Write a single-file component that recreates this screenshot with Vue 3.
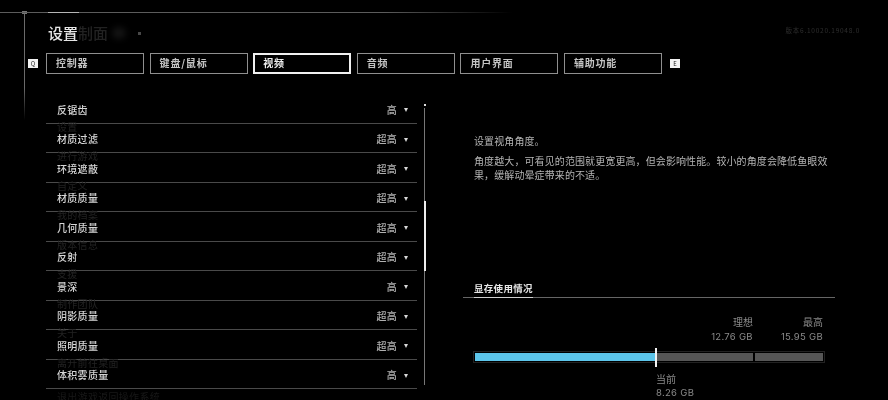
<script setup>
const tabs = [
  { label: '控制器' },
  { label: '键盘/鼠标' },
  { label: '视频', active: true },
  { label: '音频' },
  { label: '用户界面' },
  { label: '辅助功能' },
]

// the ghost text is the pause menu showing through behind the list
const rows = [
  { name: '反锯齿', value: '高', ghost: '设置' },
  { name: '材质过滤', value: '超高', ghost: '进行游戏' },
  { name: '环境遮蔽', value: '超高', ghost: '自定义' },
  { name: '材质质量', value: '超高', ghost: '我的档案' },
  { name: '几何质量', value: '超高', ghost: '版本信息' },
  { name: '反射', value: '超高', ghost: '支援' },
  { name: '景深', value: '高', ghost: '制作团队' },
  { name: '阴影质量', value: '超高', ghost: '关于' },
  { name: '照明质量', value: '超高', ghost: '离开前往桌面' },
  { name: '体积雾质量', value: '高', ghost: '退出游戏返回操作系统' },
]

const usedPercent = 52
</script>

<template>
  <div class="screen">
    <div class="side-line"></div>
    <div class="top-rule"><span class="top-accent"></span></div>

    <header class="title-bar">
      <h1 class="title">设置<span class="title-ghost">制面</span><span class="title-blob"></span><span class="title-dot"></span></h1>
      <span class="version">版本6.10020.19048.0</span>
    </header>

    <nav class="tabs">
      <span class="key-hint">Q</span>
      <button v-for="tab in tabs" :key="tab.label" class="tab" :class="{ active: tab.active }">
        {{ tab.label }}
      </button>
      <span class="key-hint key-right">E</span>
    </nav>

    <main class="content">
      <section class="list-wrap">
        <ul class="list">
          <li v-for="row in rows" :key="row.name" class="row">
            <span class="row-name">{{ row.name }}</span>
            <span class="row-value">{{ row.value }}</span>
            <span class="row-arrow"></span>
            <span class="row-ghost">{{ row.ghost }}</span>
          </li>
        </ul>
        <div class="scrollbar">
          <span class="scroll-dot"></span>
          <div class="scroll-track"><span class="scroll-thumb"></span></div>
        </div>
      </section>

      <aside class="details">
        <div class="description">
          <p>设置视角角度。</p>
          <p>角度越大，可看见的范围就更宽更高，但会影响性能。较小的角度会降低鱼眼效果，缓解动晕症带来的不适。</p>
        </div>

        <div class="memory">
          <div class="memory-head"><span class="memory-title">显存使用情况</span></div>
          <div class="limits">
            <div class="limit">
              <span>理想</span>
              <span class="num">12.76 GB</span>
            </div>
            <div class="limit limit-max">
              <span>最高</span>
              <span class="num">15.95 GB</span>
            </div>
          </div>
          <div class="bar">
            <div class="bar-used" :style="{ width: usedPercent + '%' }">
              <span class="bar-marker"></span>
            </div>
            <div class="bar-ideal"></div>
            <div class="bar-max"></div>
          </div>
          <div class="current">
            <span>当前</span>
            <span class="num">8.26 GB</span>
          </div>
        </div>
      </aside>
    </main>
  </div>
</template>

<style scoped>
.screen {
  position: relative;
  width: 888px;
  height: 400px;
  padding-top: 12px;
  box-sizing: border-box;
  overflow: hidden;
  background: #000;
  color: #d0d0d0;
  font-family: "Noto Sans CJK SC", "Liberation Sans", sans-serif;
  filter: blur(0.35px);
}

.side-line {
  position: absolute;
  left: 24px;
  top: 12px;
  width: 1px;
  height: 108px;
  background: linear-gradient(#6a6a6a 70%, rgba(106, 106, 106, 0));
}

.side-line::before {
  content: '';
  position: absolute;
  left: -2px;
  top: -1px;
  width: 5px;
  height: 3px;
  background: #777;
}

.top-rule {
  position: relative;
  height: 1px;
  width: 512px;
  background: linear-gradient(90deg, #5c5c5c 75%, rgba(92, 92, 92, 0));
}

.top-accent {
  display: block;
  width: 31px;
  height: 1px;
  margin-left: 48px;
  background: #b5b5b5;
}

.title-bar {
  display: flex;
  justify-content: space-between;
  align-items: center;
  height: 40px;
  padding: 0 28px 0 48px;
}

.title {
  display: flex;
  align-items: center;
  margin: 0;
  font-size: 15px;
  font-weight: 500;
  line-height: 40px;
  color: #e6e6e6;
}

.title-ghost {
  color: #222;
}

.title-blob {
  width: 14px;
  height: 12px;
  margin-left: 4px;
  border-radius: 50%;
  background: #141414;
  filter: blur(3px);
}

.title-dot {
  width: 3px;
  height: 3px;
  margin-left: 12px;
  background: #484848;
}

.version {
  margin-bottom: 6px;
  font-size: 6.5px;
  letter-spacing: 0.75px;
  color: #2e2e2e;
}

.tabs {
  display: flex;
  align-items: center;
  height: 21px;
  padding-left: 28px;
}

.key-hint {
  width: 10px;
  height: 9px;
  margin-right: 8px;
  background: #f2f2f2;
  color: #222;
  font-size: 6px;
  line-height: 9px;
  text-align: center;
}

.key-right {
  margin: 0 0 0 8px;
}

.tab {
  width: 98px;
  height: 21px;
  margin-right: 5.6px;
  padding: 0 0 2px 9px;
  box-sizing: border-box;
  border: 1px solid #8f8f8f;
  border-radius: 0;
  background: #000;
  color: #c4c4c4;
  font-family: inherit;
  font-size: 10px;
  font-weight: 700;
  letter-spacing: 0.8px;
  text-align: left;
}

.tab:last-of-type {
  margin-right: 0;
}

.tab.active {
  border: 2px solid #f0f0f0;
  padding-left: 8px;
  color: #f0f0f0;
}

.content {
  display: grid;
  grid-template-columns: 428px 1fr;
  margin-top: 20px;
}

.list-wrap {
  display: flex;
  padding-left: 46px;
}

.list {
  width: 371px;
  margin: 0;
  padding: 0;
  list-style: none;
}

.row {
  position: relative;
  display: flex;
  align-items: center;
  height: 29.5px;
  padding: 2px 9px 0 11px;
  box-sizing: border-box;
  border-bottom: 1px solid #4a4a4a;
  font-size: 10px;
  font-weight: 500;
  letter-spacing: 0.3px;
}

.row-name {
  flex: 1;
  color: #d6d6d6;
}

.row-value {
  margin-right: 7px;
  color: #b0b0b0;
}

.row-arrow {
  width: 0;
  height: 0;
  margin-top: 2px;
  border-left: 2.5px solid transparent;
  border-right: 2.5px solid transparent;
  border-top: 4px solid #d8d8d8;
}

.row-ghost {
  position: absolute;
  left: 11px;
  top: 27.5px;
  line-height: 10px;
  font-weight: 400;
  color: #222;
  white-space: nowrap;
}

.row:last-child .row-ghost {
  top: 32.5px;
  color: #181818;
}

.scrollbar {
  display: flex;
  flex-direction: column;
  align-items: center;
  width: 3px;
  margin: 10px 0 0 6px;
}

.scroll-dot {
  width: 2px;
  height: 2px;
  margin-bottom: 2px;
  background: #ddd;
}

.scroll-track {
  width: 1px;
  height: 277px;
  padding-top: 93px;
  box-sizing: border-box;
  background: #777;
}

.scroll-thumb {
  display: block;
  width: 2px;
  height: 70px;
  margin-left: -0.5px;
  background: #eee;
}

.details {
  padding-left: 46px;
}

.description {
  width: 362px;
  padding-top: 40px;
  font-size: 10px;
  line-height: 14px;
  letter-spacing: 0.1px;
  color: #b4b4b4;
}

.description p {
  margin: 0 0 6px;
}

.memory {
  width: 351px;
  margin-top: 98px;
  font-size: 10px;
  color: #8a8a8a;
}

.memory-head {
  width: 372px;
  margin-left: -11px;
  padding-left: 11px;
  box-sizing: border-box;
  border-bottom: 1px solid #666;
}

.memory-title {
  display: inline-block;
  height: 15px;
  line-height: 13px;
  margin-bottom: -1px;
  border-bottom: 1px solid #d0d0d0;
  color: #e6e6e6;
  font-size: 9.5px;
  font-weight: 700;
  letter-spacing: 0.3px;
}

.limits {
  display: flex;
  justify-content: flex-end;
  margin-top: 16px;
  padding-right: 2px;
}

.limit {
  display: flex;
  flex-direction: column;
  align-items: flex-end;
  line-height: 15px;
}

.limit-max {
  margin-left: 28px;
}

.num {
  font-family: "Inter", "Liberation Sans", sans-serif;
  font-size: 9.5px;
  letter-spacing: 0.3px;
}

.bar {
  display: flex;
  width: 352px;
  height: 12px;
  margin: 7px 0 0 -1px;
  padding: 1px;
  box-sizing: border-box;
  border: 1px solid #222;
}

.bar-used {
  position: relative;
  background: #5cc5ea;
}

.bar-ideal {
  flex: 1;
  background: #565656;
}

.bar-max {
  width: 68px;
  margin-left: 2px;
  background: #565656;
}

.bar-marker {
  position: absolute;
  top: -5px;
  right: -1px;
  width: 1.5px;
  height: 19px;
  background: #f2f2f2;
}

.current {
  display: flex;
  flex-direction: column;
  align-items: flex-start;
  margin: 8.5px 0 0 182px;
  line-height: 14px;
}
</style>

<style>
html,
body {
  margin: 0;
  background: #000;
}
</style>
